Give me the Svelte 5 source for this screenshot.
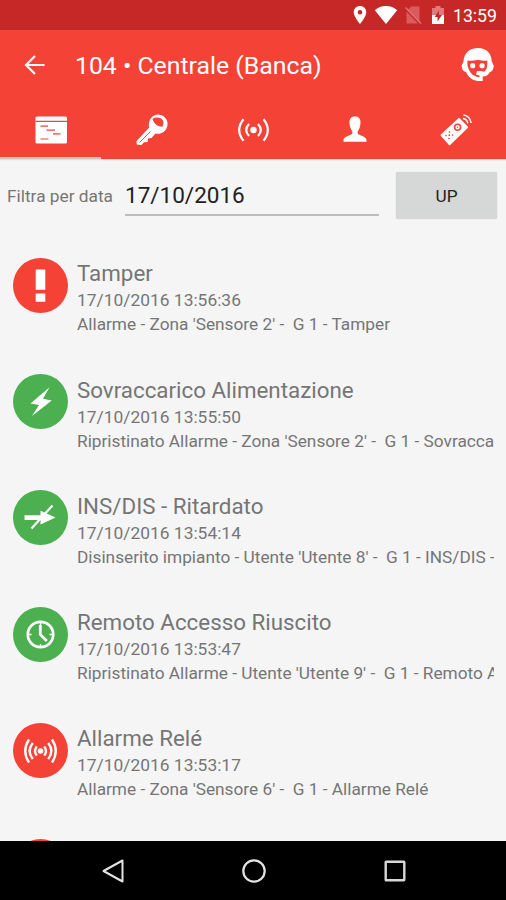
<script lang="ts">
	type EventIcon = 'alert' | 'bolt' | 'arm' | 'clock' | 'relay';
	type LogEvent = {
		icon: EventIcon;
		alarm: boolean;
		title: string;
		time: string;
		text: string;
	};

	const tabs = ['log', 'key', 'sensor', 'user', 'remote'];
	let activeTab = $state('log');
	let filterDate = $state('17/10/2016');

	const events: LogEvent[] = [
		{
			icon: 'alert',
			alarm: true,
			title: 'Tamper',
			time: '17/10/2016 13:56:36',
			text: "Allarme - Zona 'Sensore 2' -  G 1 - Tamper"
		},
		{
			icon: 'bolt',
			alarm: false,
			title: 'Sovraccarico Alimentazione',
			time: '17/10/2016 13:55:50',
			text: "Ripristinato Allarme - Zona 'Sensore 2' -  G 1 - Sovracca"
		},
		{
			icon: 'arm',
			alarm: false,
			title: 'INS/DIS - Ritardato',
			time: '17/10/2016 13:54:14',
			text: "Disinserito impianto - Utente 'Utente 8' -  G 1 - INS/DIS -"
		},
		{
			icon: 'clock',
			alarm: false,
			title: 'Remoto Accesso Riuscito',
			time: '17/10/2016 13:53:47',
			text: "Ripristinato Allarme - Utente 'Utente 9' -  G 1 - Remoto A"
		},
		{
			icon: 'relay',
			alarm: true,
			title: 'Allarme Relé',
			time: '17/10/2016 13:53:17',
			text: "Allarme - Zona 'Sensore 6' -  G 1 - Allarme Relé"
		},
		// next row, only its top edge shows above the navigation bar
		{ icon: 'alert', alarm: true, title: '', time: '', text: '' }
	];
</script>

<div class="screen">
	<div class="status">
		<svg class="s-pin" width="14" height="20" viewBox="0 0 14 20">
			<path fill="#fff" fill-rule="evenodd" d="M7 1C3.500 1 .7 3.700.7 7.200.7 11.500 7 19 7 19s6.300-7.500 6.300-11.800C13.300 3.700 10.500 1 7 1zm0 4a2.300 2.300 0 1 1 0 4.600A2.300 2.300 0 0 1 7 5z" />
		</svg>
		<svg class="s-wifi" width="24" height="20" viewBox="0 0 24 20">
			<path fill="#fff" d="M.8 5.200C3.800 2.600 7.700 1 12 1s8.200 1.600 11.200 4.200L12 19z" />
		</svg>
		<svg class="s-sim" width="18" height="20" viewBox="0 0 18 20">
			<path fill="#d85c5c" d="M7 1.500h8.500v15L4 5zM2.500 6.500 14 18.500H2.500z" />
			<path stroke="#e07474" stroke-width="1.500" d="M1.500 2.500 17 18.500" />
		</svg>
		<svg class="s-batt" width="14" height="20" viewBox="0 0 14 20">
			<path fill="#e07a7a" d="M4.500 1h5v2H13v9H1V3h3.500z" />
			<path fill="#fff" d="M1 10h12v9H1z" />
			<path fill="#c62828" d="M8 5.500 3.500 12h3v4.500L11 10H8z" />
		</svg>
		<span class="clock">13:59</span>
	</div>

	<header>
		<div class="toolbar">
			<button class="back" type="button" aria-label="Indietro">
				<svg width="22" height="22" viewBox="0 0 22 22">
					<path fill="none" stroke="#fff" stroke-width="2.200" d="M20.500 11H2.500M11 2l-9 9 9 9" />
				</svg>
			</button>
			<h1>104 • Centrale (Banca)</h1>
			<svg class="operator" width="36" height="38" viewBox="0 0 36 38">
				<path fill="#fff" d="M18 2C9.500 2 4 7 3.500 15.500L1.700 19.500c0 4 1.500 5.500 4.500 6.800 2 4.700 6 8 11.500 8.700h5v-4.500c3.500 0 5.500-1.500 7.300-4.500 2.500-.7 3.700-3 3.700-6.200l-2-4.500C31.500 7 26 2 18 2z" />
				<path fill="#f44336" d="M7.500 14.500c3.500.5 7 .2 10.500-.8 3.300 1 6.200 1.200 9.300.8.200 3.500 0 6-.8 8.500l-2.200 2.800-3.300-.8h-4l-1 3.500 3.500 1v1.700c-5.500-.5-9-3.500-10.800-8.200C7.500 20.500 7 17.500 7.500 14.500z" />
				<rect x="10.200" y="17.300" width="5" height="5" rx="1.700" fill="#fff" />
				<rect x="19.600" y="17.300" width="5" height="5" rx="1.700" fill="#fff" />
			</svg>
		</div>
		<nav class="tabs">
			{#each tabs as tab (tab)}
				<button
					class="tab"
					class:active={activeTab === tab}
					type="button"
					aria-label={tab}
					onclick={() => (activeTab = tab)}
				>
					<svg width="36" height="36" viewBox="0 0 36 36">
						{#if tab === 'log'}
							<rect x="2.500" y="4.500" width="31.500" height="27" rx="1.500" fill="#fff" />
							<path stroke="#f44336" stroke-width="1.200" d="M2.500 9.300H34M7.500 14.200H15M13.500 18.200H22M20 21.800h7.500M7.500 27h8" />
						{:else if tab === 'key'}
							<path fill="#fff" fill-rule="evenodd" d="M24.500 2.500a9.600 9.600 0 0 1 2.500 18.700c-2 .6-4 .7-5.500.3l-4 4.500-3.500.5-.5 3.500-3.500.3-2.500 2.700-4.700-.5-.3-3.500L15.200 15.500C13.500 8.500 18 2.500 24.500 2.500zM18.500 7c1.500 5 5 7.500 10 7.800C32 8 25.500 3 18.500 7z" />
							<path stroke="#f44336" stroke-width="1" d="M5.500 30.500 16.500 19.500" />
						{:else if tab === 'sensor'}
							<circle cx="18.500" cy="18" r="3.200" fill="#fff" />
							<path fill="none" stroke="#fff" stroke-width="2.200" d="M14 12q-5.600 6 0 12M23 12q5.600 6 0 12M8.500 7.300q-8.600 10.700 0 21.400M28.500 7.300q8.600 10.700 0 21.400" />
						{:else if tab === 'user'}
							<path fill="#fff" d="M19 4.500c-3.500 0-5.500 2-5.500 5.500 0 4 1 7 2.800 9.500v2.300c-3 2.200-8.800 2.700-8.800 6.700v1.300h23v-1.300c0-4-5.800-4.500-8.800-6.700v-2.300c1.800-2.500 2.800-5.500 2.800-9.500 0-3.500-2-5.500-5.500-5.500z" />
						{:else}
							<path fill="#fff" stroke="#fff" stroke-width="2" stroke-linejoin="round" d="M4.500 23.200 22 7l8 8.200-17.500 17z" />
							<circle cx="20.600" cy="15.300" r="3" fill="none" stroke="#f44336" stroke-width="1.600" />
							<circle cx="20.600" cy="15.300" r=".7" fill="#f44336" />
							<path stroke="#f44336" stroke-width="1.700" stroke-linecap="round" d="M12.500 20h0M9 23.500h0M15.500 23h0M12 26.500h0M12.300 23.200h0" />
							<path fill="none" stroke="#fff" stroke-width="1.400" d="M26 6.500q4 .5 4.800 4.800M26.500 3q6.500 1 7.700 8" />
						{/if}
					</svg>
				</button>
			{/each}
		</nav>
	</header>

	<div class="filter">
		<label for="date">Filtra per data</label>
		<input id="date" type="text" bind:value={filterDate} />
		<button class="up" type="button">UP</button>
	</div>

	<ul class="events">
		{#each events as e}
			<li class="event">
				<svg class="badge" class:alarm={e.alarm} width="55" height="55" viewBox="0 0 55 55">
					{#if e.title === ''}
						<!-- icon scrolled out of view -->
					{:else if e.icon === 'alert'}
						<path fill="#fff" d="M22.700 11.500h9.600v20.300h-9.600zM22.700 35.500h9.600v8.200h-9.600z" />
					{:else if e.icon === 'bolt'}
						<path fill="#fff" d="M36.500 13.300 17.500 29.500l8.500 1.500-7 11 19.700-15.500-8.700-1.700z" />
					{:else if e.icon === 'arm'}
						<path stroke="#fff" stroke-width="2.200" d="M18.500 38.500 39.500 15.500" />
						<path fill="#fff" d="M11.500 25.200H27.500v-4.500L42.500 27.500 27.500 34.500v-4.500h-16z" />
					{:else if e.icon === 'clock'}
						<circle cx="27.500" cy="27.500" r="12.700" fill="none" stroke="#fff" stroke-width="2.700" />
						<path fill="none" stroke="#fff" stroke-width="2.800" d="M27.300 18v9.500l6.500 6.500" />
						<path stroke="#fff" stroke-width="1.400" d="M27.500 14v4M27.500 37v4M14 27.500h4.500M36.500 27.500H41" />
					{:else}
						<circle cx="27.500" cy="28" r="2.800" fill="#fff" />
						<path fill="none" stroke="#fff" stroke-width="2.400" d="M23.800 23.500q-3.600 4.500 0 9M31.200 23.500q3.600 4.500 0 9M19.800 20q-6.400 8 0 16M35.200 20q6.400 8 0 16M16 16.500q-7.500 11.500 0 23M39 16.500q7.500 11.500 0 23" />
					{/if}
				</svg>
				<div class="lines">
					<div class="title">{e.title}</div>
					<div class="time">{e.time}</div>
					<div class="text">{e.text}</div>
				</div>
			</li>
		{/each}
	</ul>

	<div class="navbar">
		<svg width="24" height="26" viewBox="0 0 24 26">
			<path fill="none" stroke="#e4e4e4" stroke-width="2" stroke-linejoin="round" d="M21.500 2.500v21L2.500 13z" />
		</svg>
		<svg width="26" height="26" viewBox="0 0 26 26">
			<circle cx="13" cy="13" r="10.700" fill="none" stroke="#e4e4e4" stroke-width="2.200" />
		</svg>
		<svg width="24" height="24" viewBox="0 0 24 24">
			<rect x="2.700" y="2.700" width="18.600" height="18.600" rx=".5" fill="none" stroke="#d8d8d8" stroke-width="2.400" />
		</svg>
	</div>
</div>

<style>
	:global(body) {
		margin: 0;
	}
	.screen {
		width: 506px;
		height: 900px;
		overflow: hidden;
		display: flex;
		flex-direction: column;
		background: #f5f5f5;
		font-family: Roboto, 'Liberation Sans', sans-serif;
		color: #757575;
	}
	button {
		font: inherit;
		border: 0;
		padding: 0;
		cursor: pointer;
	}
	.status {
		flex: none;
		height: 30px;
		box-sizing: border-box;
		padding-right: 9px;
		display: flex;
		align-items: center;
		justify-content: flex-end;
		background: #c62828;
		color: #fff;
	}
	.s-pin {
		margin-right: 7px;
	}
	.s-wifi {
		margin-right: 6px;
	}
	.s-sim {
		margin-right: 9px;
	}
	.s-batt {
		margin-right: 8px;
	}
	.clock {
		padding-top: 2px;
		font-size: 17.7px;
		line-height: 28px;
	}
	header {
		flex: none;
		height: 129px;
		background: #f44336;
		box-shadow: 0 1px 1px rgba(244, 67, 54, 0.2);
	}
	.toolbar {
		height: 70px;
		display: flex;
		align-items: center;
		padding: 0 10px 0 24px;
	}
	.back {
		display: flex;
		background: none;
	}
	h1 {
		flex: 1;
		margin: 1px 0 0 29px;
		font-size: 24.8px;
		font-weight: 400;
		color: #fff;
		white-space: nowrap;
	}
	.tabs {
		display: grid;
		grid-template-columns: repeat(5, 1fr);
		height: 59px;
	}
	.tab {
		display: flex;
		align-items: center;
		justify-content: center;
		background: none;
	}
	.tab.active {
		box-shadow: inset 0 -2px #d0c8c6;
	}
	.filter {
		flex: none;
		height: 73px;
		display: flex;
		align-items: center;
		padding: 0 9px 0 7px;
	}
	label {
		width: 118px;
		font-size: 17.300px;
		white-space: nowrap;
	}
	input {
		width: 254px;
		height: 40px;
		box-sizing: border-box;
		padding: 0;
		margin-right: 17px;
		border: 0;
		border-bottom: 2px solid #bdbdbd;
		outline: none;
		background: none;
		font: 22.5px Roboto, 'Liberation Sans', sans-serif;
		color: #212121;
	}
	.up {
		flex: 1;
		height: 47px;
		border-radius: 2px;
		background: #d6d7d7;
		color: #212121;
		font-size: 17.200px;
		box-shadow: 0 0 1px #bbb;
	}
	.events {
		flex: 1;
		min-height: 0;
		overflow: hidden;
		margin: 0;
		padding: 26px 12px 0 13px;
		list-style: none;
	}
	.event {
		display: flex;
		height: 116.200px;
	}
	.badge {
		flex: none;
		border-radius: 50%;
		background: #4caf50;
	}
	.badge.alarm {
		background: #f44336;
	}
	.lines {
		flex: 1;
		min-width: 0;
		margin-left: 9px;
		padding-top: 0.4px;
		overflow: hidden;
	}
	.title {
		font-size: 22.35px;
		line-height: 30px;
	}
	.time {
		font-size: 17.400px;
		line-height: 24px;
	}
	.text {
		font-size: 17.260px;
		line-height: 24px;
		white-space: pre;
	}
	.navbar {
		flex: none;
		height: 59px;
		box-sizing: border-box;
		padding: 1px 99px 0 101px;
		display: flex;
		align-items: center;
		justify-content: space-between;
		background: #000;
	}
</style>
